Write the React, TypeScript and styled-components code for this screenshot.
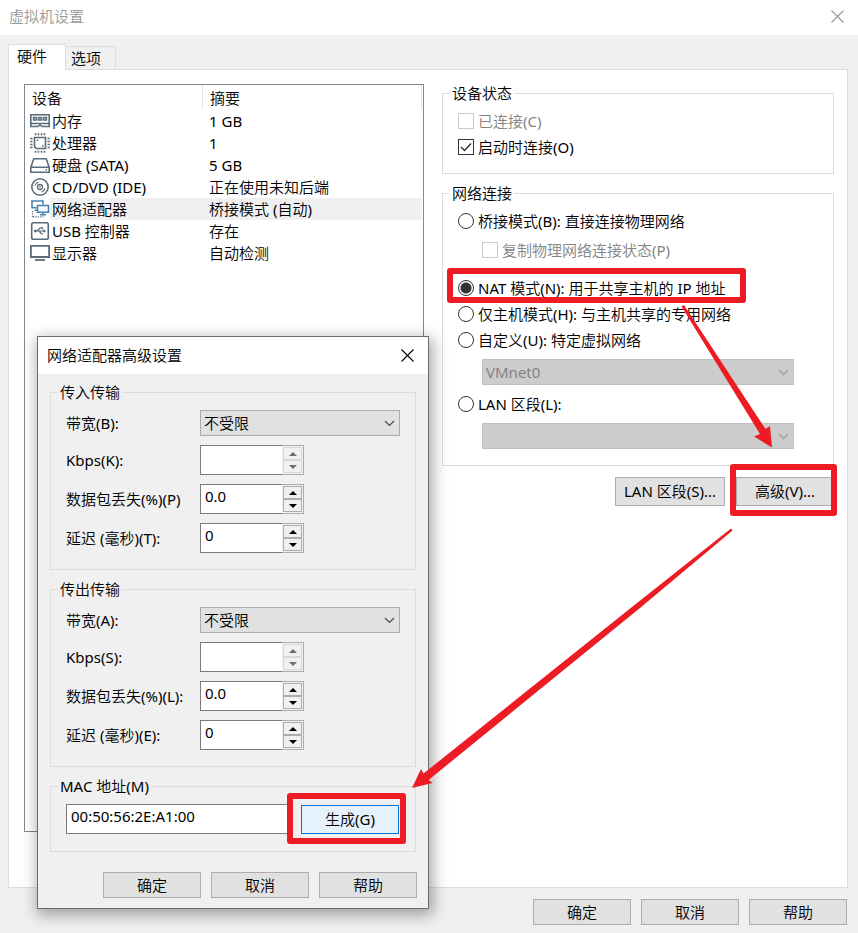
import React from "react";
import styled, { createGlobalStyle, css } from "styled-components";

const GlobalStyle = createGlobalStyle`
  *, *::before, *::after { box-sizing: border-box; }
  body { margin: 0; }
  body, button, input, select {
    font-family: "Noto Sans", "Noto Sans CJK SC DemiLight", "Noto Sans CJK SC", sans-serif;
    font-size: 15px;
    line-height: 19px;
    color: #000;
  }
`;

const Page = styled.div`
  position: relative;
  display: flex;
  flex-direction: column;
  min-height: 100vh;
  background: #f0f0f0;
`;

const TitleBar = styled.header<{ $muted?: boolean }>`
  display: flex;
  align-items: center;
  justify-content: space-between;
  height: ${(p) => (p.$muted ? 35 : 37)}px;
  padding: ${(p) => (p.$muted ? "0 14px 2px 9px" : "0 14px 0 9px")};
  background: #fff;
  color: ${(p) => (p.$muted ? "#999" : "#000")};
`;

const Title = styled.h1`
  margin: 0;
  font-size: 15px;
  font-weight: 400;
`;

const CloseButton = styled.button`
  display: flex;
  padding: 0;
  border: 0;
  background: none;
  color: inherit;
`;

const TabBar = styled.div`
  display: flex;
  align-items: flex-end;
  height: 34px;
  padding: 0 8px;
`;

const Tab = styled.button<{ $active?: boolean }>`
  border: 1px solid #dcdcdc;
  border-bottom: 0;
  text-align: left;
  ${(p) =>
    p.$active
      ? css`
          z-index: 1;
          width: 58px;
          height: 26px;
          margin-bottom: -1px;
          padding: 0 8px 2px;
          background: #fff;
        `
      : css`
          width: 50px;
          height: 23px;
          padding: 0 5px;
          border-left: 0;
          background: #f0f0f0;
        `}
`;

const Panel = styled.main`
  display: flex;
  flex: 1;
  gap: 18px;
  margin: 0 10px 0 8px;
  padding: 14px 13px 55px 15px;
  border: 1px solid #dcdcdc;
  background: #fff;
`;

const DeviceList = styled.section`
  flex: 0 1 400px;
  padding-right: 1px;
  border: 1px solid #828790;
`;

const DeviceTable = styled.table`
  width: 100%;
  border-collapse: separate;
  border-spacing: 0;
  table-layout: fixed;
`;

const IconCol = styled.col`
  width: 25px;
`;

const NameCol = styled.col`
  width: 153px;
`;

const HeadCell = styled.th`
  height: 25px;
  padding: 1px 6px 0 7px;
  border-right: 1px solid #e5e5e5;
  font-weight: 400;
  text-align: left;
`;

const Cell = styled.td<{ $selected?: boolean; $wide?: boolean }>`
  height: 22px;
  padding: 0 0 0 ${(p) => (p.$wide ? 6 : 2)}px;
  background: ${(p) => (p.$selected ? "#f0f0f0" : "transparent")};
  white-space: nowrap;
`;

const IconCell = styled.td`
  height: 22px;
  padding: 0 0 0 5px;

  svg {
    display: block;
  }
`;

const Details = styled.section`
  display: flex;
  flex: 1;
  flex-direction: column;
  gap: 10px;
  min-width: 0;
`;

const Group = styled.fieldset`
  min-width: 0;
  margin: 0;
  padding: 0 7px;
  border: 1px solid #dcdcdc;
`;

const GroupTitle = styled.legend`
  height: 19px;
  padding: 0 2px;
`;

const GroupBody = styled.div`
  padding: 5px 8px 13px;
`;

const Choice = styled.label<{ $disabled?: boolean }>`
  display: flex;
  align-items: center;
  gap: 4px;
  height: 26px;
  color: ${(p) => (p.$disabled ? "#838383" : "#000")};
  white-space: nowrap;
`;

const Indented = styled.div`
  margin: 3px 24px 12px;
`;

const ComboSlot = styled.div`
  margin: 6px 24px;

  &:last-child {
    margin-bottom: 3px;
  }
`;

const Radio = styled.input`
  flex: none;
  width: 16px;
  height: 16px;
  margin: 0;
  border: 1px solid #333;
  border-radius: 50%;
  appearance: none;

  &:checked {
    background: radial-gradient(circle, #333 0 5px, transparent 6px);
  }
`;

const CheckFrame = styled.span`
  display: grid;
  flex: none;

  > * {
    grid-area: 1 / 1;
  }

  svg {
    pointer-events: none;
  }
`;

const Check = styled.input`
  width: 16px;
  height: 16px;
  margin: 0;
  border: 1px solid #333;
  background: #fff;
  appearance: none;

  &:disabled {
    border-color: #ccc;
  }
`;

const ComboFrame = styled.div`
  display: grid;
  align-items: center;

  > * {
    grid-area: 1 / 1;
  }

  svg {
    justify-self: end;
    margin-right: 5px;
    pointer-events: none;
  }
`;

const Combo = styled.select`
  width: 100%;
  height: 26px;
  padding: 0 20px 0 3px;
  border: 1px solid #adadad;
  border-radius: 0;
  background: #e1e1e1;
  color: #000;
  appearance: none;

  &:disabled {
    border-color: #bfbfbf;
    background: #ccc;
    color: #838383;
    opacity: 1;
  }
`;

const ButtonRow = styled.div<{ $footer?: boolean }>`
  display: flex;
  justify-content: flex-end;
  gap: 10px;
  padding: ${(p) => (p.$footer ? "11px 11px 8px" : "0")};
`;

const Button = styled.button<{ $wide?: boolean; $tall?: boolean; $focus?: boolean }>`
  flex: none;
  width: ${(p) => (p.$wide ? 110 : 98)}px;
  height: ${(p) => (p.$tall ? 29 : 26)}px;
  padding: 0;
  border: 1px solid ${(p) => (p.$focus ? "#0078d7" : "#adadad")};
  background: ${(p) => (p.$focus ? "#e5f1fb" : "#e1e1e1")};
  white-space: nowrap;
`;

const DetailActions = styled.div`
  display: flex;
  justify-content: flex-end;
  gap: 11px;
  padding-top: 1px;
`;

const Dialog = styled.div`
  position: absolute;
  top: 336px;
  left: 37px;
  width: 392px;
  border: 1px solid #6b6b6b;
  background: #f0f0f0;
  box-shadow: 2px 4px 14px 2px rgba(0, 0, 0, 0.34);
`;

const DialogBody = styled.div`
  display: flex;
  flex-direction: column;
  gap: 10px;
  padding: 9px 12px 0;
`;

const DialogFooter = styled.div`
  padding: 20px 11px 10px;
`;

const FieldGrid = styled.div`
  display: grid;
  grid-template-columns: 134px 1fr;
  align-items: center;
  gap: 9px 0;
  padding: 8px 8px 16px;
`;

const FieldLabel = styled.label`
  white-space: nowrap;
`;

const Spinner = styled.div`
  display: flex;
  width: 104px;
  height: 30px;
`;

const TextInput = styled.input<{ $joined?: boolean }>`
  flex: 1;
  min-width: 0;
  height: 30px;
  padding: 0 4px 6px;
  border: 1px solid #7a7a7a;
  border-right-width: ${(p) => (p.$joined ? 0 : 1)}px;
  border-radius: 0;
  background: #fff;
`;

const SpinButtons = styled.div`
  display: grid;
  grid-template-rows: 1fr 1fr;
  width: 22px;
  padding: 1px;
  border: 1px solid #adadad;
  border-left: 0;
`;

const SpinButton = styled.button`
  display: flex;
  align-items: center;
  justify-content: center;
  padding: 0;
  border: 1px solid #adadad;
  background: #f0f0f0;
  color: #000;

  &:disabled {
    border-color: #d9d9d9;
    color: #6d6d6d;
  }
`;

const MacRow = styled.div`
  display: flex;
  align-items: center;
  gap: 8px;
  padding: 8px 9px 17px 8px;
`;

const Annotations = styled.svg`
  position: absolute;
  top: 0;
  left: 0;
  pointer-events: none;
`;

const INK = "#5b6b78";
const BLUE = "#4682ab";

function DeviceIcon({ kind }: { kind: string }) {
  return (
    <svg width="20" height="20" viewBox="0 0 20 20" fill="none" stroke={INK} strokeWidth="1.6" aria-hidden="true">
      {kind === "memory" && (
        <>
          <path d="M.8 3.8H19.2V12.5H.8Z" />
          <path d="M3.6 6.5H6.4V9H3.6ZM8.6 6.5H11.4V9H8.6ZM13.6 6.5H16.4V9H13.6Z" />
          <path d="M.8 12.5V15.5H8L10 13.8L12 15.5H19.2V12.5" />
        </>
      )}
      {kind === "cpu" && (
        <>
          <path d="M4.5 4.5H15.5V15.5H6.2L4.5 13.8Z" />
          <path d="M5.5 .3V2.3M8.5 .3V2.3M11.5 .3V2.3M14.5 .3V2.3M5.5 17.7V19.7M8.5 17.7V19.7M11.5 17.7V19.7M14.5 17.7V19.7M.2 5.5H2.5M.2 8.5H2.5M.2 11.5H2.5M.2 14.5H2.5M17.5 5.5H19.8M17.5 8.5H19.8M17.5 11.5H19.8M17.5 14.5H19.8" />
          <path d="M6.7 7.3H8.3M12 13H13.5" />
        </>
      )}
      {kind === "disk" && (
        <>
          <path d="M.8 12.5L3.8 3.8H16.2L19.2 12.5V17.2H.8ZM.8 12.3H19.2" />
          <path d="M15.5 14.8H17" />
        </>
      )}
      {kind === "disc" && (
        <>
          <circle cx="10" cy="10" r="8.2" />
          <circle cx="10" cy="10" r="2.5" strokeWidth="1.3" />
          <circle cx="10" cy="10" r=".4" strokeWidth="1" />
          <path d="M5 8.5A5.2 5.2 0 0 1 8.5 5M15 11.5A5.2 5.2 0 0 1 11.5 15" strokeWidth="1.2" />
        </>
      )}
      {kind === "network" && (
        <>
          <path d="M6.5 8.8H2V2H13V5.5M4.5 11.2H7" stroke={BLUE} />
          <path d="M7.5 6.5H18.5V13.3H7.5ZM10 15.8H16M13 13.5V15.7" stroke={BLUE} />
          <path d="M2.5 12V18M3 17.8H13.5" strokeWidth="1.2" strokeDasharray="1.2 1.2" />
        </>
      )}
      {kind === "usb" && (
        <>
          <rect x="1.7" y="1.7" width="16.6" height="16.6" rx="1.8" />
          <path d="M5 10H14.5M7 10L10 7H12M9 10L11.5 13H13" strokeWidth="1.2" />
          <circle cx="5.3" cy="10" r="1" fill={INK} strokeWidth="1" />
          <path d="M13.5 8.5L16 10L13.5 11.5ZM11.5 6.3H13V7.7H11.5Z" fill={INK} strokeWidth=".3" />
        </>
      )}
      {kind === "display" && (
        <>
          <path d="M.9 2.9H19.1V14H.9Z" strokeWidth="1.8" />
          <path d="M5 17H15" strokeWidth="1.8" />
        </>
      )}
    </svg>
  );
}

function CloseIcon() {
  return (
    <svg width="13" height="13" viewBox="0 0 13 13" fill="none" stroke="currentColor" strokeWidth="1.1" aria-hidden="true">
      <path d="M.5 .5L12.5 12.5M12.5 .5L.5 12.5" />
    </svg>
  );
}

function ComboBox({ id, value, disabled, label }: { id: string; value: string; disabled?: boolean; label?: string }) {
  return (
    <ComboFrame>
      <Combo id={id} disabled={disabled} defaultValue={value} aria-label={label}>
        <option value={value}>{value}</option>
      </Combo>
      <svg width="11" height="7" viewBox="0 0 11 7" fill="none" stroke={disabled ? "#9c9c9c" : "#444"} strokeWidth="1.1" aria-hidden="true">
        <path d="M1 1L5.5 5.5L10 1" />
      </svg>
    </ComboFrame>
  );
}

function Tick({ text, checked, disabled }: { text: string; checked?: boolean; disabled?: boolean }) {
  return (
    <Choice $disabled={disabled}>
      <CheckFrame>
        <Check type="checkbox" defaultChecked={checked} disabled={disabled} />
        {checked && (
          <svg width="16" height="16" viewBox="0 0 16 16" fill="none" stroke="#333" strokeWidth="1.5" aria-hidden="true">
            <path d="M3 8L6.5 11.5L13 4.5" />
          </svg>
        )}
      </CheckFrame>
      {text}
    </Choice>
  );
}

function Option({ text, checked }: { text: string; checked?: boolean }) {
  return (
    <Choice>
      <Radio type="radio" name="network" defaultChecked={checked} />
      {text}
    </Choice>
  );
}

function SpinBox({ id, value, disabled }: { id: string; value: string; disabled?: boolean }) {
  return (
    <Spinner>
      <TextInput id={id} defaultValue={value} disabled={disabled} $joined />
      <SpinButtons>
        <SpinButton disabled={disabled} aria-label="增加">
          <svg width="8" height="4" viewBox="0 0 8 4" fill="currentColor"><path d="M0 4L4 0L8 4Z" /></svg>
        </SpinButton>
        <SpinButton disabled={disabled} aria-label="减少">
          <svg width="8" height="4" viewBox="0 0 8 4" fill="currentColor"><path d="M0 0L4 4L8 0Z" /></svg>
        </SpinButton>
      </SpinButtons>
    </Spinner>
  );
}

function TransferGroup({ name, title, labels }: { name: string; title: string; labels: string[] }) {
  return (
    <Group>
      <GroupTitle>{title}</GroupTitle>
      <FieldGrid>
        <FieldLabel htmlFor={`${name}-bandwidth`}>{labels[0]}</FieldLabel>
        <ComboBox id={`${name}-bandwidth`} value="不受限" />
        <FieldLabel htmlFor={`${name}-kbps`}>{labels[1]}</FieldLabel>
        <SpinBox id={`${name}-kbps`} value="" disabled />
        <FieldLabel htmlFor={`${name}-loss`}>{labels[2]}</FieldLabel>
        <SpinBox id={`${name}-loss`} value="0.0" />
        <FieldLabel htmlFor={`${name}-delay`}>{labels[3]}</FieldLabel>
        <SpinBox id={`${name}-delay`} value="0" />
      </FieldGrid>
    </Group>
  );
}

const devices = [
  { icon: "memory", name: "内存", summary: "1 GB" },
  { icon: "cpu", name: "处理器", summary: "1" },
  { icon: "disk", name: "硬盘 (SATA)", summary: "5 GB" },
  { icon: "disc", name: "CD/DVD (IDE)", summary: "正在使用未知后端" },
  { icon: "network", name: "网络适配器", summary: "桥接模式 (自动)", selected: true },
  { icon: "usb", name: "USB 控制器", summary: "存在" },
  { icon: "display", name: "显示器", summary: "自动检测" },
];

export default function App() {
  return (
    <>
      <GlobalStyle />
      <Page>
        <TitleBar $muted>
          <Title>虚拟机设置</Title>
          <CloseButton aria-label="关闭"><CloseIcon /></CloseButton>
        </TitleBar>
        <TabBar role="tablist">
          <Tab role="tab" aria-selected="true" $active>硬件</Tab>
          <Tab role="tab" aria-selected="false">选项</Tab>
        </TabBar>
        <Panel>
          <DeviceList>
            <DeviceTable>
              <colgroup>
                <IconCol />
                <NameCol />
                <col />
              </colgroup>
              <thead>
                <tr>
                  <HeadCell colSpan={2}>设备</HeadCell>
                  <HeadCell>摘要</HeadCell>
                </tr>
              </thead>
              <tbody>
                {devices.map((d) => (
                  <tr key={d.name}>
                    <IconCell><DeviceIcon kind={d.icon} /></IconCell>
                    <Cell $selected={d.selected}>{d.name}</Cell>
                    <Cell $selected={d.selected} $wide>{d.summary}</Cell>
                  </tr>
                ))}
              </tbody>
            </DeviceTable>
          </DeviceList>
          <Details>
            <Group>
              <GroupTitle>设备状态</GroupTitle>
              <GroupBody>
                <Tick text="已连接(C)" disabled />
                <Tick text="启动时连接(O)" checked />
              </GroupBody>
            </Group>
            <Group>
              <GroupTitle>网络连接</GroupTitle>
              <GroupBody>
                <Option text="桥接模式(B): 直接连接物理网络" />
                <Indented>
                  <Tick text="复制物理网络连接状态(P)" disabled />
                </Indented>
                <Option text="NAT 模式(N): 用于共享主机的 IP 地址" checked />
                <Option text="仅主机模式(H): 与主机共享的专用网络" />
                <Option text="自定义(U): 特定虚拟网络" />
                <ComboSlot>
                  <ComboBox id="vmnet" label="虚拟网络" value="VMnet0" disabled />
                </ComboSlot>
                <Option text="LAN 区段(L):" />
                <ComboSlot>
                  <ComboBox id="lan" label="LAN 区段" value="" disabled />
                </ComboSlot>
              </GroupBody>
            </Group>
            <DetailActions>
              <Button $wide $tall>LAN 区段(S)...</Button>
              <Button $tall>高级(V)...</Button>
            </DetailActions>
          </Details>
        </Panel>
        <ButtonRow $footer>
          <Button>确定</Button>
          <Button>取消</Button>
          <Button>帮助</Button>
        </ButtonRow>

        <Dialog role="dialog" aria-label="网络适配器高级设置">
          <TitleBar>
            <Title as="h2">网络适配器高级设置</Title>
            <CloseButton aria-label="关闭"><CloseIcon /></CloseButton>
          </TitleBar>
          <DialogBody>
            <TransferGroup name="in" title="传入传输" labels={["带宽(B):", "Kbps(K):", "数据包丢失(%)(P)", "延迟 (毫秒)(T):"]} />
            <TransferGroup name="out" title="传出传输" labels={["带宽(A):", "Kbps(S):", "数据包丢失(%)(L):", "延迟 (毫秒)(E):"]} />
            <Group>
              <GroupTitle><label htmlFor="mac">MAC 地址(M)</label></GroupTitle>
              <MacRow>
                <TextInput id="mac" defaultValue="00:50:56:2E:A1:00" />
                <Button $tall $focus>生成(G)</Button>
              </MacRow>
            </Group>
          </DialogBody>
          <DialogFooter>
            <ButtonRow>
              <Button>确定</Button>
              <Button>取消</Button>
              <Button>帮助</Button>
            </ButtonRow>
          </DialogFooter>
        </Dialog>

        <Annotations width="858" height="933" viewBox="0 0 858 933" fill="none" aria-hidden="true">
          <g stroke="#ed1c24" strokeWidth="6" strokeLinejoin="round">
            <rect x="450" y="271" width="293" height="29" />
            <rect x="733" y="467" width="101" height="46" />
            <rect x="290" y="796" width="113" height="45" />
          </g>
          <g fill="#ed1c24">
            <path d="M681.5 306.5L684 305L765.5 429L770 426L772 447.5L754 436.5L760 434Z" />
            <path d="M731 528.5L732.5 530.5L640 608L428.5 780L432.5 783L412 788L421 769L423.5 773.5L637 603Z" />
          </g>
        </Annotations>
      </Page>
    </>
  );
}
